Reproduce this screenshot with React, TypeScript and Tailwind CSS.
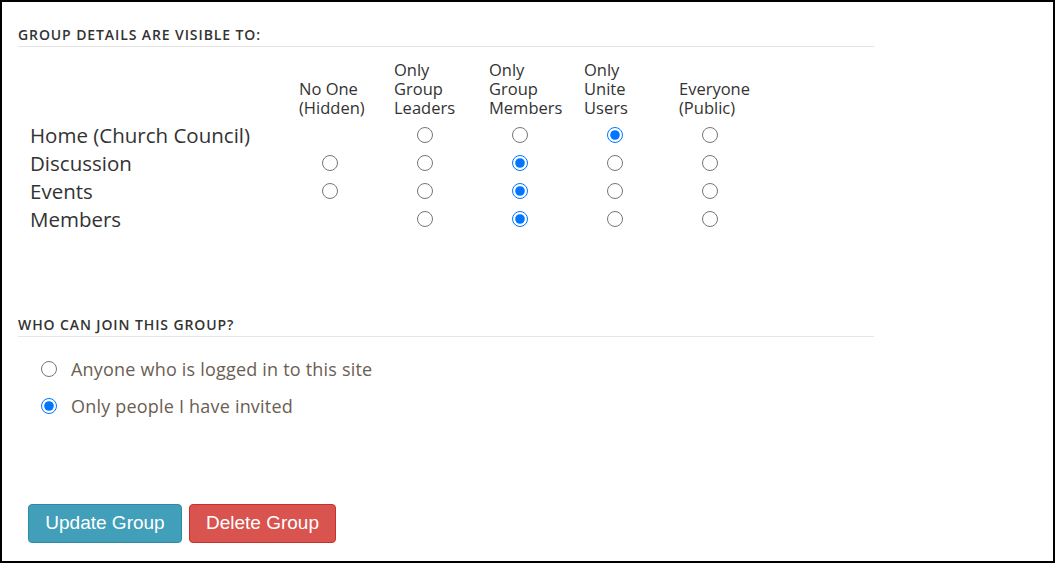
import React from 'react';

const columns = [
  ['', 'No One', '(Hidden)'],
  ['Only', 'Group', 'Leaders'],
  ['Only', 'Group', 'Members'],
  ['Only', 'Unite', 'Users'],
  ['', 'Everyone', '(Public)'],
];

// null = option not offered for that row
const rows: { label: string; options: (boolean | null)[] }[] = [
  { label: 'Home (Church Council)', options: [null, false, false, true, false] },
  { label: 'Discussion', options: [false, false, true, false, false] },
  { label: 'Events', options: [false, false, true, false, false] },
  { label: 'Members', options: [null, false, true, false, false] },
];

function Radio({ checked, name }: { checked: boolean; name: string }) {
  return (
    <input
      type="radio"
      name={name}
      defaultChecked={checked}
      className="m-0 w-[16px] h-[16px] block shrink-0"
    />
  );
}

function SectionTitle({ children }: { children: React.ReactNode }) {
  return (
    <div className="w-[856px] border-b border-[#e5e5e5] pb-[2px] text-[14px] leading-[18px] font-semibold tracking-[0.9px] text-[#333]">
      {children}
    </div>
  );
}

export default function App() {
  return (
    <div
      className="w-[1055px] h-[563px] border-2 border-black bg-white pl-[16px] pt-[24px]"
      style={{ fontFamily: '"Open Sans", "DejaVu Sans", sans-serif' }}
    >
      <SectionTitle>GROUP DETAILS ARE VISIBLE TO:</SectionTitle>

      {/* Visibility matrix */}
      <div className="mt-[13px] pl-[12px]">
        <div className="flex">
          <div className="w-[269px]" />
          {columns.map((lines, i) => (
            <div key={i} className="w-[95px] text-[16.5px] leading-[19px] text-[#333]">
              {lines.map((l, j) => (
                <div key={j} className="h-[19px] whitespace-nowrap">{l}</div>
              ))}
            </div>
          ))}
        </div>
        <div className="mt-[4px]">
          {rows.map((row, r) => (
            <div key={r} className="flex items-center h-[28px]">
              <div className="w-[269px] text-[20.5px] leading-[28px] text-[#333]">{row.label}</div>
              {row.options.map((opt, c) => (
                <div key={c} className="w-[95px] pl-[23px]">
                  {opt !== null && <Radio checked={opt} name={`vis-${r}`} />}
                </div>
              ))}
            </div>
          ))}
        </div>
      </div>

      <div className="mt-[83px]">
        <SectionTitle>WHO CAN JOIN THIS GROUP?</SectionTitle>
      </div>

      <div className="mt-[20px] pl-[23px] flex flex-col gap-[13px] text-[18px] leading-[24px] tracking-[0.2px] text-[#6b5e53]">
        <label className="flex items-center gap-[14px]">
          <Radio checked={false} name="join" />
          Anyone who is logged in to this site
        </label>
        <label className="flex items-center gap-[14px]">
          <Radio checked={true} name="join" />
          Only people I have invited
        </label>
      </div>

      <div className="mt-[86px] pl-[10px] flex gap-[7px]" style={{ fontFamily: '"Liberation Sans", Arial, sans-serif' }}>
        <button className="h-[39px] w-[154px] rounded-[4px] border border-[#2f8aa5] bg-[#419fba] text-white text-[19px]">
          Update Group
        </button>
        <button className="h-[39px] w-[147px] rounded-[4px] border border-[#c9302c] bg-[#d9534f] text-white text-[19px]">
          Delete Group
        </button>
      </div>
    </div>
  );
}
